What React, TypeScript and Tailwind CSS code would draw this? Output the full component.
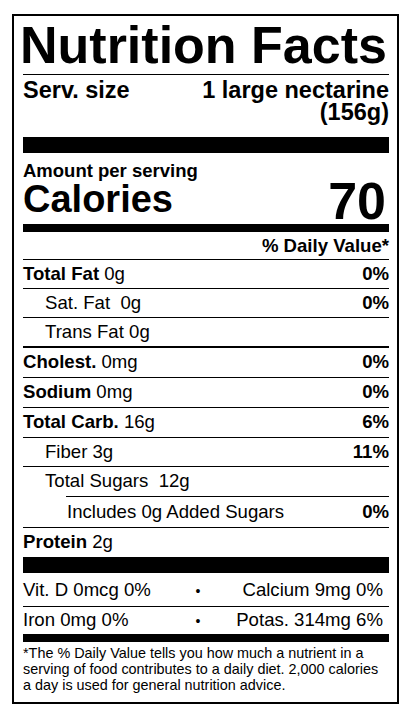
import { FC, ReactNode } from 'react';

interface RowProps {
  h: string;
  indent?: string;
  line?: string;
  right?: ReactNode;
  children: ReactNode;
}

const Row: FC<RowProps> = ({ h, indent = '', line = 'border-b border-black', right, children }) => {
  return (
    <div className={`flex items-center justify-between text-[18.6px] leading-none ${h} ${line}`}>
      <span className={indent}>{children}</span>
      {right && <span className="font-bold">{right}</span>}
    </div>
  );
};

const App: FC = () => {
  return (
    <main
      className="min-h-screen bg-white pl-[12px] pt-[14px] text-black"
      style={{ fontFamily: '"Liberation Sans", Arial, sans-serif' }}
    >
      <div className="flex h-[690px] w-[387px] flex-col border-2 border-black pl-[9px] pr-[8px]">
        <div className="h-[59px] border-b border-black">
          <h1 className="-ml-[3px] whitespace-nowrap text-[52px] font-bold leading-[58px]">Nutrition Facts</h1>
        </div>

        <div className="flex h-[62px] justify-between pt-[4px] text-[23.5px] font-bold leading-[22px]">
          <span>Serv. size</span>
          <span className="text-right">
            1 large nectarine
            <br />
            (156g)
          </span>
        </div>

        <div className="h-[16px] bg-black" />

        <div className="h-[71px] pt-[8px]">
          <div className="text-[18.5px] font-bold leading-[20px]">Amount per serving</div>
          <div className="flex h-[43px] items-start justify-between font-bold">
            <span className="text-[38px] leading-[37px]">Calories</span>
            <span className="-mt-[6px] pr-[3px] text-[52px] leading-[52px]">70</span>
          </div>
        </div>

        <div className="h-[8px] bg-black" />

        <div className="h-[28px] border-b border-black text-right text-[18.6px] font-bold leading-[27px]">
          % Daily Value*
        </div>

        <Row h="h-[29px]" right="0%">
          <b>Total Fat</b> 0g
        </Row>
        <Row h="h-[29px]" indent="pl-[22px]" right="0%">
          Sat. Fat&nbsp; 0g
        </Row>
        <Row h="h-[30px]" indent="pl-[22px]" line="border-b-2 border-black">
          Trans Fat 0g
        </Row>
        <Row h="h-[30px]" right="0%">
          <b>Cholest.</b> 0mg
        </Row>
        <Row h="h-[30px]" right="0%">
          <b>Sodium</b> 0mg
        </Row>
        <Row h="h-[30px]" right="6%">
          <b>Total Carb.</b> 16g
        </Row>
        <Row h="h-[29px]" indent="pl-[22px]" right="11%">
          Fiber 3g
        </Row>
        <Row h="h-[29px]" indent="pl-[22px]" line="">
          Total Sugars&nbsp; 12g
        </Row>
        <div className="ml-[43px] h-px bg-black" />
        <Row h="h-[31px]" indent="pl-[44px]" right="0%">
          Includes 0g Added Sugars
        </Row>
        <Row h="h-[29px]" line="">
          <b>Protein</b> 2g
        </Row>

        <div className="h-[16px] bg-black" />

        <div className="flex h-[34px] items-center border-b border-black pt-[2px] text-[18.6px] leading-none">
          <span className="w-[165px]">Vit. D 0mcg 0%</span>
          <span className="w-[20px] text-center text-[14px]">•</span>
          <span className="flex-1 pr-[6px] text-right">Calcium 9mg 0%</span>
        </div>
        <div className="flex h-[27px] items-center text-[18.6px] leading-none">
          <span className="w-[165px]">Iron 0mg 0%</span>
          <span className="w-[20px] text-center text-[14px]">•</span>
          <span className="flex-1 pr-[6px] text-right">Potas. 314mg 6%</span>
        </div>

        <div className="h-[8px] bg-black" />

        <p className="flex-1 whitespace-nowrap pt-[3px] text-[14.4px] leading-[16px]">
          *The % Daily Value tells you how much a nutrient in a
          <br />
          serving of food contributes to a daily diet. 2,000 calories
          <br />
          a day is used for general nutrition advice.
        </p>
      </div>
    </main>
  );
};

export default App;
